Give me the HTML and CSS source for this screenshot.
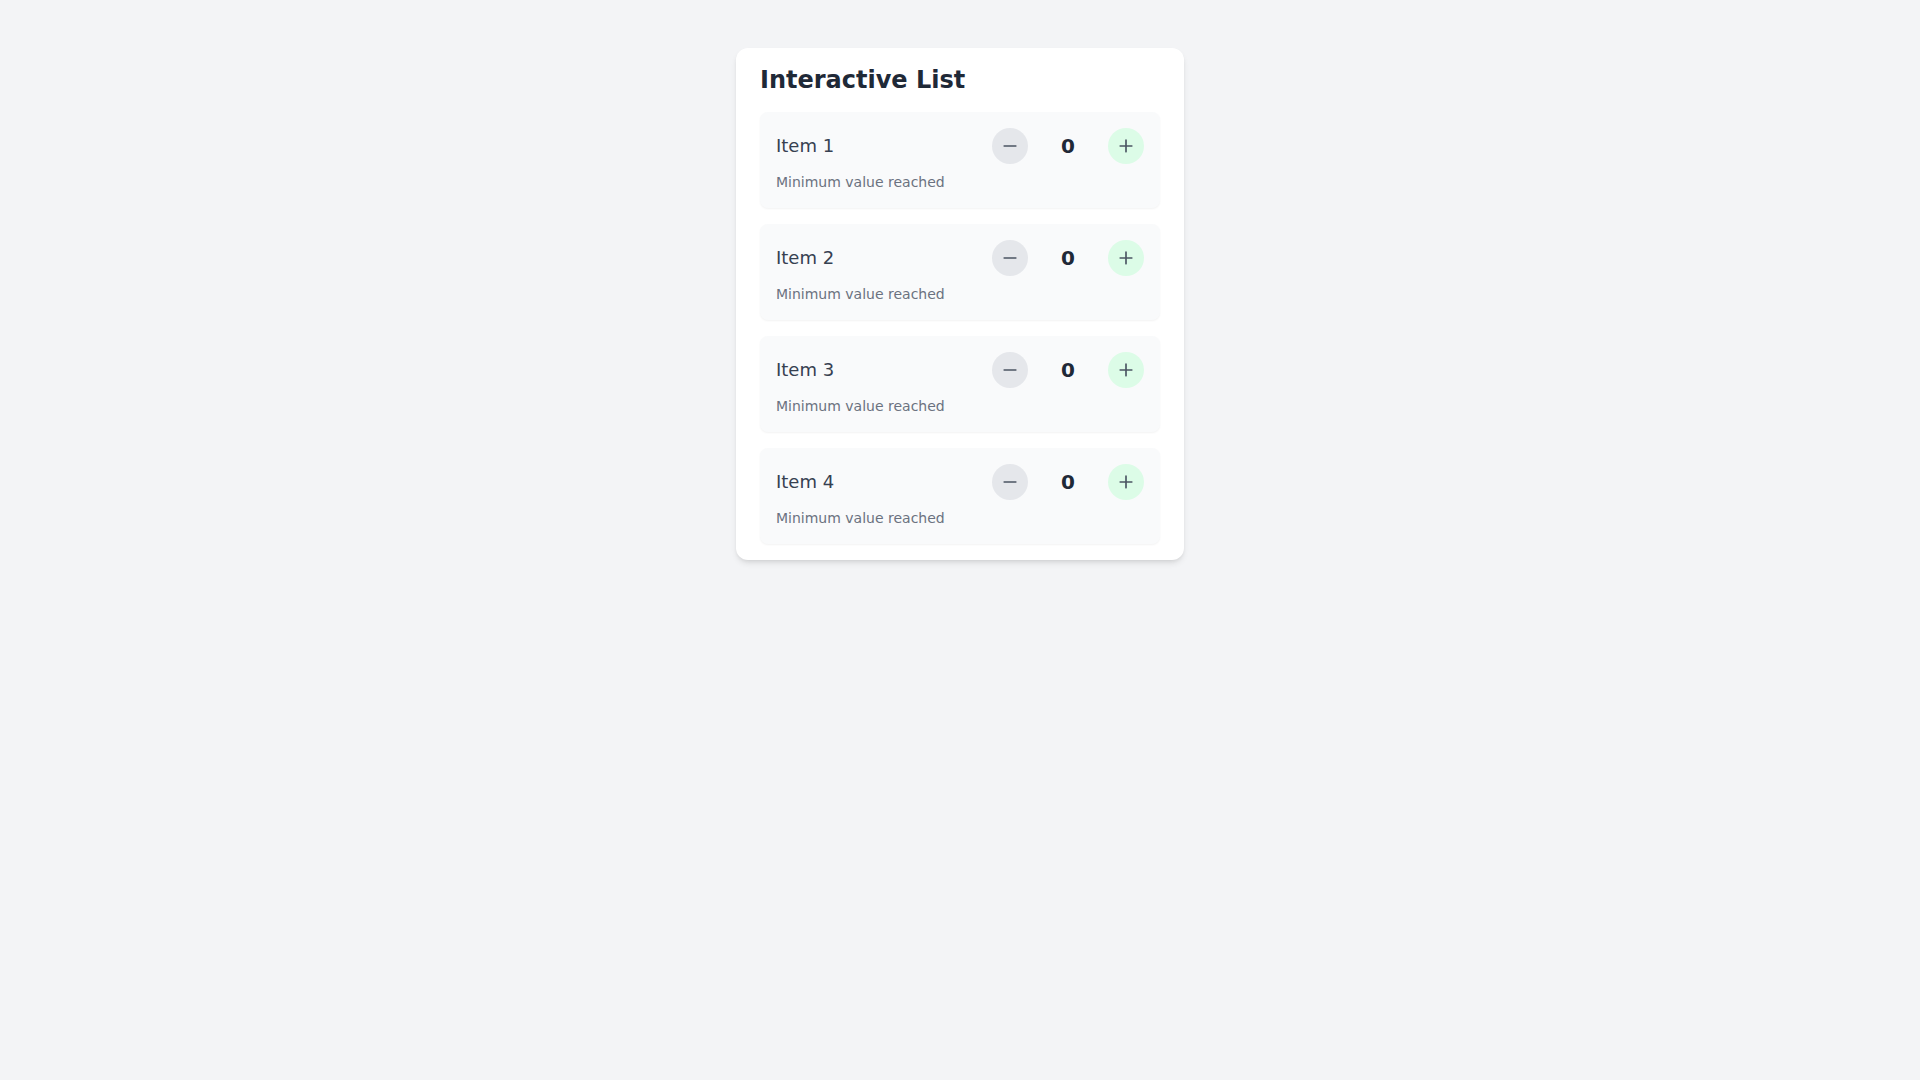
FILE: index.html
```html
<!DOCTYPE html>
<html lang="en">
<head>
<meta charset="utf-8">
<title>Interactive List</title>
<link rel="stylesheet" href="styles.css">
</head>
<body>
<main class="page">
  <section class="card">
    <h1 class="title">Interactive List</h1>
    <ul class="list">
      <li class="item">
        <div class="row">
          <span class="name">Item 1</span>
          <div class="counter">
            <button class="btn btn-minus" aria-label="Decrease"><svg viewBox="0 0 24 24"><path d="M5 12h14"/></svg></button>
            <span class="value">0</span>
            <button class="btn btn-plus" aria-label="Increase"><svg viewBox="0 0 24 24"><path d="M5 12h14M12 5v14"/></svg></button>
          </div>
        </div>
        <p class="note">Minimum value reached</p>
      </li>
      <li class="item">
        <div class="row">
          <span class="name">Item 2</span>
          <div class="counter">
            <button class="btn btn-minus" aria-label="Decrease"><svg viewBox="0 0 24 24"><path d="M5 12h14"/></svg></button>
            <span class="value">0</span>
            <button class="btn btn-plus" aria-label="Increase"><svg viewBox="0 0 24 24"><path d="M5 12h14M12 5v14"/></svg></button>
          </div>
        </div>
        <p class="note">Minimum value reached</p>
      </li>
      <li class="item">
        <div class="row">
          <span class="name">Item 3</span>
          <div class="counter">
            <button class="btn btn-minus" aria-label="Decrease"><svg viewBox="0 0 24 24"><path d="M5 12h14"/></svg></button>
            <span class="value">0</span>
            <button class="btn btn-plus" aria-label="Increase"><svg viewBox="0 0 24 24"><path d="M5 12h14M12 5v14"/></svg></button>
          </div>
        </div>
        <p class="note">Minimum value reached</p>
      </li>
      <li class="item">
        <div class="row">
          <span class="name">Item 4</span>
          <div class="counter">
            <button class="btn btn-minus" aria-label="Decrease"><svg viewBox="0 0 24 24"><path d="M5 12h14"/></svg></button>
            <span class="value">0</span>
            <button class="btn btn-plus" aria-label="Increase"><svg viewBox="0 0 24 24"><path d="M5 12h14M12 5v14"/></svg></button>
          </div>
        </div>
        <p class="note">Minimum value reached</p>
      </li>
    </ul>
  </section>
</main>
</body>
</html>
```

FILE: styles.css
```css
* { box-sizing: border-box; }
html, body { margin: 0; padding: 0; }
body {
  background: #f3f4f6;
  font-family: "DejaVu Sans", sans-serif;
  color: #1f2937;
  min-height: 100vh;
}
.page {
  padding-top: 48px;
  display: flex;
  justify-content: center;
}
.card {
  width: 448px;
  background: #ffffff;
  border-radius: 12px;
  padding: 16px 24px 16px;
  box-shadow: 0 4px 6px -1px rgba(0,0,0,0.1), 0 2px 4px -2px rgba(0,0,0,0.1);
}
.title {
  margin: 0 0 16px;
  font-size: 24px;
  line-height: 32px;
  font-weight: 700;
  color: #1f2937;
}
.list {
  list-style: none;
  margin: 0;
  padding: 0;
  display: flex;
  flex-direction: column;
  gap: 16px;
}
.item {
  background: #f9fafb;
  border-radius: 8px;
  padding: 16px;
  box-shadow: 0 1px 2px 0 rgba(0,0,0,0.05);
}
.row {
  display: flex;
  align-items: center;
  justify-content: space-between;
  height: 36px;
}
.name {
  font-size: 18px;
  line-height: 28px;
  color: #374151;
}
.counter {
  display: flex;
  align-items: center;
  gap: 16px;
}
.btn {
  width: 36px;
  height: 36px;
  border: none;
  border-radius: 50%;
  padding: 0;
  display: flex;
  align-items: center;
  justify-content: center;
  cursor: pointer;
}
.btn svg {
  width: 20px;
  height: 20px;
  fill: none;
  stroke: #4b5563;
  stroke-width: 2;
  stroke-linecap: round;
  stroke-linejoin: round;
}
.btn-minus { background: #e5e7eb; }
.btn-plus { background: #dcfce7; }
.value {
  width: 48px;
  text-align: center;
  font-size: 20px;
  line-height: 28px;
  font-weight: 700;
  color: #1f2937;
}
.note {
  margin: 8px 0 0;
  font-size: 14px;
  line-height: 20px;
  color: #6b7280;
}
```
